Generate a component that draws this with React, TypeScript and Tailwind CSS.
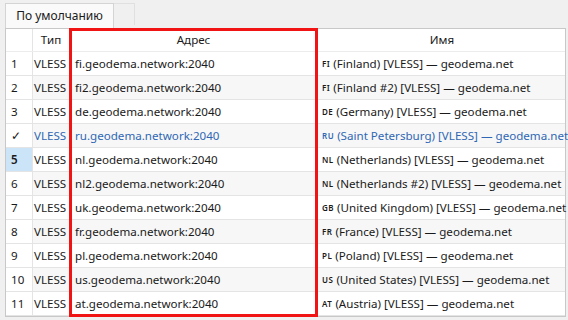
const rows = [
  { n: "1", addr: "fi.geodema.network:2040", cc: "FI", name: "(Finland) [VLESS] — geodema.net" },
  { n: "2", addr: "fi2.geodema.network:2040", cc: "FI", name: "(Finland #2) [VLESS] — geodema.net" },
  { n: "3", addr: "de.geodema.network:2040", cc: "DE", name: "(Germany) [VLESS] — geodema.net" },
  { n: "✓", addr: "ru.geodema.network:2040", cc: "RU", name: "(Saint Petersburg) [VLESS] — geodema.net", active: true },
  { n: "5", addr: "nl.geodema.network:2040", cc: "NL", name: "(Netherlands) [VLESS] — geodema.net", selected: true },
  { n: "6", addr: "nl2.geodema.network:2040", cc: "NL", name: "(Netherlands #2) [VLESS] — geodema.net" },
  { n: "7", addr: "uk.geodema.network:2040", cc: "GB", name: "(United Kingdom) [VLESS] — geodema.net" },
  { n: "8", addr: "fr.geodema.network:2040", cc: "FR", name: "(France) [VLESS] — geodema.net" },
  { n: "9", addr: "pl.geodema.network:2040", cc: "PL", name: "(Poland) [VLESS] — geodema.net" },
  { n: "10", addr: "us.geodema.network:2040", cc: "US", name: "(United States) [VLESS] — geodema.net" },
  { n: "11", addr: "at.geodema.network:2040", cc: "AT", name: "(Austria) [VLESS] — geodema.net" },
];

export default function App() {
  return (
    <div
      className="relative w-[568px] h-[320px] overflow-hidden bg-[#f0f0f0] text-[11.6px] text-[#1a1a1a]"
      style={{ fontFamily: '"Noto Sans", "Open Sans", sans-serif' }}
    >
      {/* tabs */}
      <div className="flex items-start pl-[5px] pt-[3px] h-[28px]">
        <div className="w-[109px] h-[25px] bg-[#fafafa] border border-b-0 border-[#d4d4d4] flex items-center justify-center text-[12px]">
          По умолчанию
        </div>
        <div className="w-[21px] h-[22px] border border-l-0 border-b-0 border-[#e0e0e0]" />
      </div>

      {/* table */}
      <div className="ml-[5px] w-[561px] bg-white border border-[#c8c8c8]">
        <div className="grid grid-cols-[27px_37px_248px_248px] h-[23px] items-center border-b border-[#ececec]">
          <div className="h-full border-r border-[#e4e4e4]" />
          <div className="h-full flex items-center justify-center border-r border-[#e4e4e4]">Тип</div>
          <div className="h-full flex items-center justify-center border-r border-[#e4e4e4]">Адрес</div>
          <div className="h-full flex items-center justify-center">Имя</div>
        </div>
        {rows.map((r, i) => (
          <div
            key={i}
            className={`grid grid-cols-[27px_37px_248px_248px] h-[24px] border-b border-[#e4e4e4] ${
              i % 2 === 1 ? "bg-[#f7f7f7]" : "bg-white"
            } ${r.active ? "text-[#2f67b4]" : ""}`}
          >
            <div
              className={`flex items-center pl-[5px] border-r border-[#e4e4e4] text-[#1a1a1a] ${
                r.selected ? "bg-[#cce4f7] font-semibold" : "bg-white"
              }`}
            >
              {r.n}
            </div>
            <div className="flex items-center pl-[1px] border-r border-[#e4e4e4] overflow-hidden whitespace-nowrap">
              VLESS
            </div>
            <div className="flex items-center pl-[5px] border-r border-[#e4e4e4] whitespace-nowrap">
              {r.addr}
            </div>
            <div className="flex items-center pl-[4px] whitespace-nowrap">
              <span className="text-[8px] font-semibold mr-[3px] tracking-[0.5px]">{r.cc}</span>
              {r.name}
            </div>
          </div>
        ))}
      </div>

      {/* red highlight over the address column */}
      <div className="absolute left-[69px] top-[28px] w-[249px] h-[289px] border-[3px] border-[#f01414] pointer-events-none" />
    </div>
  );
}
